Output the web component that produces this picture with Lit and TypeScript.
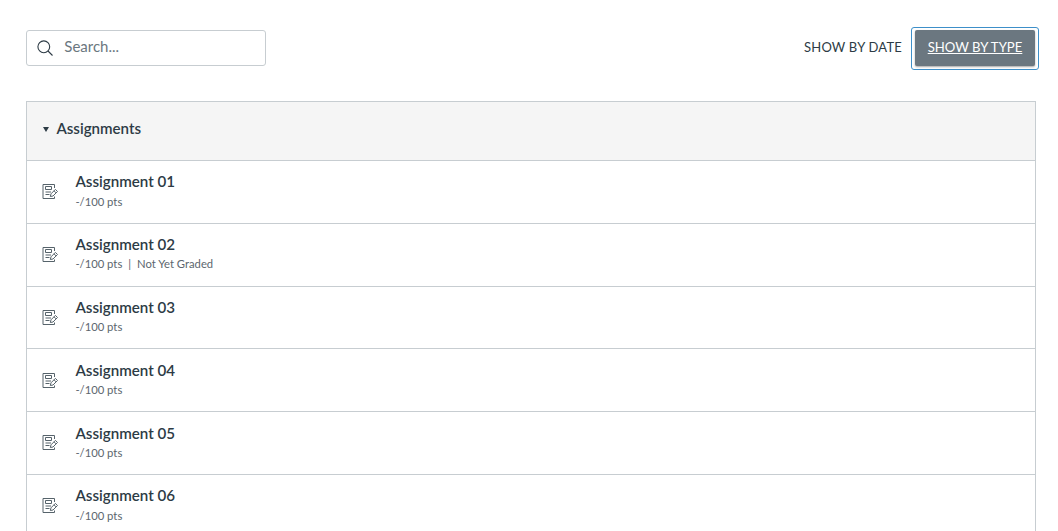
import { LitElement, html, css, nothing } from 'lit';
import { customElement, property, state } from 'lit/decorators.js';

interface Assignment {
  name: string;
  points: number;
  status?: string;
}

@customElement('assignment-row')
export class AssignmentRow extends LitElement {
  static styles = css`
    :host {
      display: block;
      box-sizing: border-box;
      height: 62.8px;
      border-bottom: 1px solid #c7cdd1;
    }
    .row {
      display: flex;
      padding-left: 15px;
    }
    .icon {
      width: 16px;
      height: 16px;
      margin: 23.2px 17.4px 0 0;
      fill: none;
      stroke: #56636b;
      stroke-width: 1;
    }
    .title {
      margin-top: 10.4px;
      font-size: 15.15px;
      font-weight: 600;
      line-height: 20px;
      color: #2d3b45;
    }
    .details {
      display: flex;
      margin-top: 2.2px;
      font-size: 11.25px;
      line-height: 16px;
      color: #5b666e;
    }
    .divider {
      margin: 0 6px;
    }
  `;

  @property({ attribute: false }) assignment!: Assignment;

  render() {
    const { name, points, status } = this.assignment;
    return html`
      <div class="row">
        <svg class="icon" viewBox="0 0 16 16">
          <path d="M12.5 4V.5H1V14.5H12.5V12.5" />
          <path d="M3.5 2.5H9.5V5.5H3.5ZM3.5 8H9M3.5 10.5H7.5" />
          <path d="M8.3 12.5L9 9.8L13.4 5.4L15.5 7.5L11 12ZM12 6.8L14.1 8.9" />
        </svg>
        <div>
          <div class="title">${name}</div>
          <div class="details">
            <span>-/${points} pts</span>
            ${status ? html`<span class="divider">|</span><span>${status}</span>` : nothing}
          </div>
        </div>
      </div>
    `;
  }
}

@customElement('app-root')
export class AppRoot extends LitElement {
  static styles = css`
    :host {
      display: block;
      box-sizing: border-box;
      height: 531px;
      overflow: hidden;
      padding: 27px 19px 0 26px;
      background: #fff;
      font-family: Lato, 'Liberation Sans', sans-serif;
      color: #2d3b45;
    }
    .toolbar {
      display: flex;
      justify-content: space-between;
      height: 43px;
    }
    .search {
      display: flex;
      align-items: center;
      box-sizing: border-box;
      width: 240px;
      height: 36px;
      margin-top: 3px;
      padding-left: 10px;
      border: 1px solid #c7cdd1;
      border-radius: 3px;
    }
    .search svg {
      width: 16px;
      height: 16px;
      fill: none;
      stroke: #2d3b45;
      stroke-width: 1.1;
    }
    .search input {
      width: 180px;
      margin-left: 11.3px;
      padding: 0 0 4px;
      border: 0;
      outline: 0;
      background: none;
      font: 15px/20px Lato, 'Liberation Sans', sans-serif;
      color: #2d3b45;
    }
    .search input::placeholder {
      color: #6b7780;
      opacity: 1;
    }
    .toggle {
      display: flex;
      align-items: center;
    }
    button {
      border: 0;
      padding: 0;
      background: none;
      font: 13px/20px Lato, 'Liberation Sans', sans-serif;
      color: #2d3b45;
      cursor: pointer;
    }
    .by-date {
      margin: 0 9px 3px 0;
      letter-spacing: 0.2px;
    }
    .focus-ring {
      box-sizing: border-box;
      width: 128px;
      height: 43px;
      padding: 2px 3px;
      border: 1px solid #3d8fc9;
      border-radius: 3px;
    }
    .by-type {
      display: block;
      width: 120px;
      height: 36px;
      padding-bottom: 2px;
      border-radius: 2px;
      background: #6b7780;
      box-shadow: 0 1px 2px rgba(0, 0, 0, 0.35);
      color: #fff;
      font-size: 13.15px;
      text-decoration: underline;
    }
    .group {
      margin: 31px 3px 0 0;
      border: 1px solid #c7cdd1;
    }
    .group-header {
      display: flex;
      box-sizing: border-box;
      height: 59px;
      padding: 16px 0 0 16px;
      border-bottom: 1px solid #c7cdd1;
      background: #f5f5f5;
      font-size: 15.1px;
      font-weight: 600;
      line-height: 20px;
    }
    .caret {
      width: 6px;
      height: 5px;
      margin: 9px 7.4px 0 0;
      fill: #2d3b45;
    }
  `;

  @state() private assignments: Assignment[] = [
    { name: 'Assignment 01', points: 100 },
    { name: 'Assignment 02', points: 100, status: 'Not Yet Graded' },
    { name: 'Assignment 03', points: 100 },
    { name: 'Assignment 04', points: 100 },
    { name: 'Assignment 05', points: 100 },
    { name: 'Assignment 06', points: 100 },
  ];

  render() {
    return html`
      <div class="toolbar">
        <label class="search">
          <svg viewBox="0 0 16 16">
            <circle cx="6.8" cy="6.8" r="5.9" />
            <path d="M11 11L15.5 15.5" />
          </svg>
          <input type="text" placeholder="Search..." />
        </label>
        <div class="toggle">
          <button class="by-date">SHOW BY DATE</button>
          <div class="focus-ring">
            <button class="by-type">SHOW BY TYPE</button>
          </div>
        </div>
      </div>
      <div class="group">
        <div class="group-header">
          <svg class="caret" viewBox="0 0 6 5"><path d="M0 0H6L3 5Z" /></svg>
          Assignments
        </div>
        ${this.assignments.map((a) => html`<assignment-row .assignment=${a}></assignment-row>`)}
      </div>
    `;
  }
}
